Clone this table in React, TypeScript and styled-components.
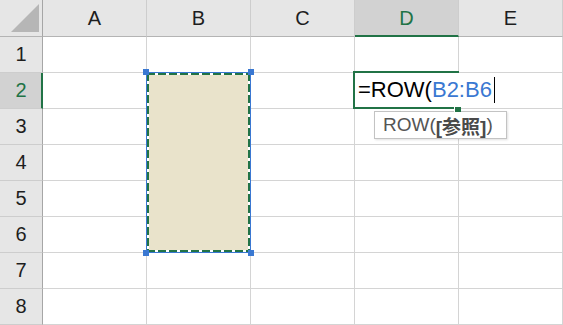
import { Fragment } from 'react';
import styled, { createGlobalStyle } from 'styled-components';

const GREEN = '#217346';
const BLUE = '#3a78d2';
const COLUMNS = ['A', 'B', 'C', 'D', 'E'];
const ROWS = [1, 2, 3, 4, 5, 6, 7, 8];
const ACTIVE_COL = 'D';
const ACTIVE_ROW = 2;

const GlobalStyle = createGlobalStyle`
  body {
    margin: 0;
    background: #fff;
    overflow: hidden;
    font-family: "Liberation Sans", "Noto Sans CJK JP", sans-serif;
  }
`;

const Sheet = styled.div`
  display: grid;
  grid-template-columns: 43px repeat(5, 104px);
  grid-template-rows: 37px repeat(8, 36px);
  width: 563px;
`;

// every grid child gets an explicit slot so the overlays can share cells
type Slot = { $row: number; $col: number };

const Corner = styled.div`
  grid-row: 1;
  grid-column: 1;
  position: relative;
  background: #e6e6e6;
  border-right: 1px solid #a6a6a6;
  border-bottom: 1px solid #b4b4b4;
  box-sizing: border-box;

  &::after {
    content: '';
    position: absolute;
    right: 3px;
    bottom: 4px;
    width: 28px;
    height: 28px;
    background: #b6b6b6;
    clip-path: polygon(100% 0, 100% 100%, 0 100%);
  }
`;

const ColHeader = styled.div<Slot & { $active?: boolean }>`
  grid-row: ${p => p.$row};
  grid-column: ${p => p.$col};
  display: flex;
  align-items: center;
  justify-content: center;
  box-sizing: border-box;
  background: ${p => (p.$active ? '#d2d2d2' : '#e6e6e6')};
  color: ${p => (p.$active ? GREEN : '#1e1e1e')};
  border-right: 1px solid #cdcdcd;
  border-bottom: ${p => (p.$active ? `2px solid ${GREEN}` : '1px solid #b4b4b4')};
  font-size: 20px;
  padding-top: ${p => (p.$active ? '1px' : '0')};
`;

const RowHeader = styled.div<Slot & { $active?: boolean }>`
  grid-row: ${p => p.$row};
  grid-column: ${p => p.$col};
  display: flex;
  align-items: center;
  justify-content: center;
  box-sizing: border-box;
  background: ${p => (p.$active ? '#d2d2d2' : '#e6e6e6')};
  color: ${p => (p.$active ? GREEN : '#1e1e1e')};
  border-right: ${p => (p.$active ? `2px solid ${GREEN}` : '1px solid #a6a6a6')};
  border-bottom: 1px solid #cdcdcd;
  font-size: 20px;
  padding-left: ${p => (p.$active ? '1px' : '0')};
`;

const Cell = styled.div<Slot>`
  grid-row: ${p => p.$row};
  grid-column: ${p => p.$col};
  box-sizing: border-box;
  border-right: 1px solid #d4d4d4;
  border-bottom: 1px solid #d4d4d4;
  background: #fff;
`;

const dashes = (dir: string) =>
  `repeating-linear-gradient(${dir}, ${GREEN} 0 8px, #fff 8px 11px)`;

// referenced range B2:B6 while the formula is being typed
const RangeBox = styled.div`
  grid-column: 3;
  grid-row: 3 / 8;
  margin: -1px 0 0 -1px;
  position: relative;
  z-index: 1;
  border: 1px solid ${BLUE};
  background:
    ${dashes('90deg')} top / 100% 2px no-repeat,
    ${dashes('90deg')} bottom / 100% 2px no-repeat,
    ${dashes('180deg')} left / 2px 100% no-repeat,
    ${dashes('180deg')} right / 2px 100% no-repeat,
    #e9e3cb;
`;

const Handle = styled.span<{ $x: 'left' | 'right'; $y: 'top' | 'bottom' }>`
  position: absolute;
  width: 6px;
  height: 6px;
  background: ${BLUE};
  ${p => p.$x}: -4px;
  ${p => p.$y}: -4px;
`;

const ActiveCell = styled.div`
  grid-column: 5;
  grid-row: 3;
  margin: -2px 0 0 -2px;
  position: relative;
  z-index: 2;
  border: 2px solid ${GREEN};
`;

const Editor = styled.div`
  position: absolute;
  left: 0;
  top: 0;
  height: 100%;
  width: 142px;
  box-sizing: border-box;
  padding-left: 3px;
  display: flex;
  align-items: center;
  background: #fff;
  font-size: 22px;
  color: #000;
  white-space: nowrap;
`;

const RefText = styled.span`
  color: ${BLUE};
`;

const Caret = styled.span`
  display: inline-block;
  width: 0;
  height: 26px;
  margin-left: 2px;
  border-left: 1px solid #000;
`;

const FillHandle = styled.span`
  position: absolute;
  right: -4px;
  bottom: -5px;
  width: 6px;
  height: 5px;
  background: ${GREEN};
  border-left: 1px solid #fff;
  z-index: 3;
`;

const Tooltip = styled.div`
  position: absolute;
  left: 19px;
  top: 38px;
  height: 28px;
  box-sizing: border-box;
  padding: 0 13px 0 8px;
  display: flex;
  align-items: center;
  background: #fff;
  border: 1px solid #c3c3c3;
  box-shadow: 1px 1px 2px rgba(0, 0, 0, 0.12);
  color: #555;
  font-size: 19px;
  white-space: nowrap;
`;

const Arg = styled.b`
  font-weight: bold;
  color: #4a4a4a;
`;

export default function App() {
  return (
    <>
      <GlobalStyle />
      <Sheet>
        <Corner />
        {COLUMNS.map((c, i) => (
          <ColHeader key={c} $row={1} $col={i + 2} $active={c === ACTIVE_COL}>
            {c}
          </ColHeader>
        ))}
        {ROWS.map(r => (
          <Fragment key={r}>
            <RowHeader $row={r + 1} $col={1} $active={r === ACTIVE_ROW}>
              {r}
            </RowHeader>
            {COLUMNS.map((c, i) => (
              <Cell key={c} $row={r + 1} $col={i + 2} />
            ))}
          </Fragment>
        ))}
        <RangeBox>
          <Handle $x="left" $y="top" />
          <Handle $x="right" $y="top" />
          <Handle $x="left" $y="bottom" />
          <Handle $x="right" $y="bottom" />
        </RangeBox>
        <ActiveCell>
          <Editor>
            =ROW(<RefText>B2:B6</RefText>
            <Caret />
          </Editor>
          <FillHandle />
          <Tooltip>
            ROW(<Arg>[参照]</Arg>)
          </Tooltip>
        </ActiveCell>
      </Sheet>
    </>
  );
}
